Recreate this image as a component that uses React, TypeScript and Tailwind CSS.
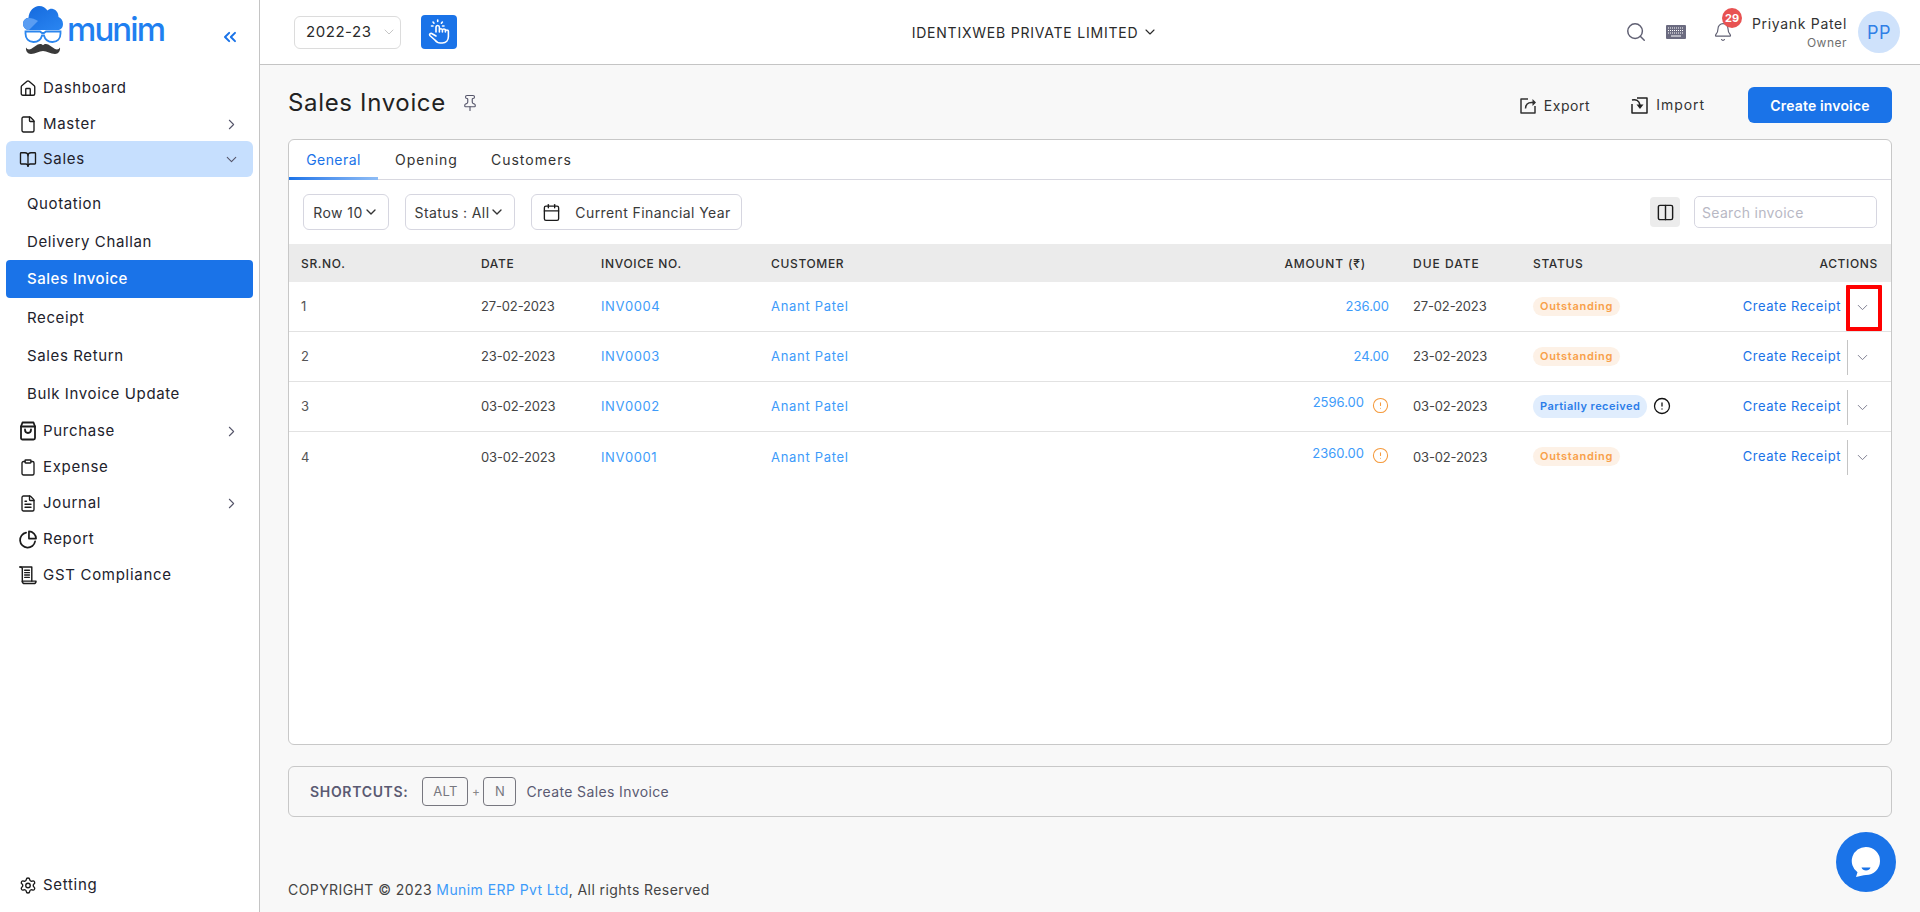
import React from "react";
import {
  ChevronRight, ChevronDown, ChevronsLeft, Home, File, BookOpen, Clipboard, FileText, Settings,
  Search, Bell, Calendar, Columns2, CircleAlert, Pin,
} from "lucide-react";

const font = { fontFamily: "Inter, 'Noto Sans', sans-serif" };

function Logo() {
  return (
    <div className="flex items-start h-[64px] pl-[23px] pt-[6px]">
      <svg width="40" height="49" viewBox="0 0 40 49" className="shrink-0">
        <defs>
          <linearGradient id="cl" x1="0" y1="0" x2="1" y2="1">
            <stop offset="0" stopColor="#1468dc" />
            <stop offset="1" stopColor="#2a86f2" />
          </linearGradient>
        </defs>
        <path d="M4.5 24C1.5 23 0 20.500 0 18c0-3.500 2.500-6 5.500-6.300C6 5 11 0 16 0c4 0 6.500 1.800 8.500 4.500C26 3 28 2.500 30 3c3.500 1 5.500 4 5.500 8 2.500 1 4.500 3.500 4.500 7 0 3.500-2 6-5 6z" fill="url(#cl)" />
        <path d="M0 18c0-3.500 2.500-6 6-6 3 0 6 1 9 3l-9 9H4.500C1.500 23 0 20.500 0 18z" fill="#5a9df2" />
        <path d="M2.500 25.500h14.500l2 1.500h2l2-1.500h14.500v2c0 5-3 8.500-8 8.500-4.500 0-7.500-2.500-8.500-6.500h-2c-1 4-4 6.500-8.500 6.500-5 0-8-3.500-8-8.500z" fill="none" stroke="#2b86ee" strokeWidth="1.800" />
        <path d="M3 41.500c1 2 3 2.500 5 1.500 3-1.500 6-5 9-5 1.300 0 2.300.5 3 1.300.7-.8 1.700-1.300 3-1.300 3 0 6 3.500 9 5 2 1 4 .5 5-1.500.5 3-1.500 6.500-5 6.500-4.500 0-8-3-12-3s-7.500 3-12 3c-3.500 0-5.500-3.500-5-6.500z" fill="#3a3a3a" />
      </svg>
      <span className="ml-[4px] mt-[5px] text-[33px] leading-[36px] font-medium text-[#1f7ff0] tracking-[-1.9px]" style={font}>munim</span>
      <ChevronsLeft className="absolute left-[220px] top-[27px] text-[#1a73e8]" size={20} strokeWidth={2.400} />
    </div>
  );
}

function Bag() {
  return (
    <svg width="18" height="20" viewBox="0 0 18 20" fill="none" stroke="#1b1b1b" strokeWidth="1.800" strokeLinecap="round" strokeLinejoin="round">
      <path d="M2 5.500 3.500 1.500h11L16 5.500v11.500a1.500 1.500 0 0 1-1.500 1.500h-11A1.500 1.500 0 0 1 2 17z" />
      <path d="M2 5.500h14" />
      <path d="M6 8.500c0 2 1.300 3.500 3 3.500s3-1.500 3-3.500" />
    </svg>
  );
}

function Scroll() {
  return (
    <svg width="19" height="20" viewBox="0 0 19 20" fill="none" stroke="#1b1b1b" strokeWidth="1.500" strokeLinecap="round" strokeLinejoin="round">
      <path d="M1 1.500h12.500v15" />
      <path d="M1 1.500c1.500 0 2.500.7 2.500 2v13.500" />
      <path d="M3.500 16.500h14.500c0 1.500-1 2.500-2.500 2.500H6c-1.500 0-2.500-1-2.500-2.500" />
      <path d="M6 5h5M6 7.500h5M6 10h5M6 12.500h5" />
    </svg>
  );
}

function PieIcon() {
  return (
    <svg width="19" height="19" viewBox="0 0 19 19" fill="none" stroke="#1b1b1b" strokeWidth="1.800" strokeLinecap="round" strokeLinejoin="round">
      <path d="M7.500 2.200A8 8 0 1 0 17 11.500" />
      <path d="M10.500 1v7.500H18A7.500 7.500 0 0 0 10.500 1z" />
    </svg>
  );
}

function NavItem({ icon, label, arrow, active }: { icon: React.ReactNode; label: string; arrow?: "right" | "down"; active?: boolean }) {
  return (
    <div className={active ? "flex items-center h-[36px] pl-[13px] pr-[13px] rounded-[6px] bg-[#c6dffe]" : "flex items-center h-[36px] pl-[13px] pr-[13px] rounded-[6px]"}>
      <span className="w-[18px] h-[20px] flex items-center justify-center shrink-0">{icon}</span>
      <span className="ml-[6px] text-[15px] tracking-[0.7px] text-[#22222c] flex-1">{label}</span>
      {arrow === "right" && <ChevronRight size={17} strokeWidth={1.500} className="text-[#55556a]" />}
      {arrow === "down" && <ChevronDown size={17} strokeWidth={1.500} className="text-[#55556a]" />}
    </div>
  );
}

function SubItem({ label, active }: { label: string; active?: boolean }) {
  return (
    <div className={active ? "-mt-px mb-px flex items-center h-[38px] pl-[21px] rounded-[4px] bg-[#1a73e8] text-white font-medium text-[15px] tracking-[0.5px]" : "flex items-center h-[38px] pl-[21px] text-[15px] tracking-[0.62px] text-[#22222c]"}>
      {label}
    </div>
  );
}

function Sidebar() {
  const icon = { size: 21, strokeWidth: 1.800, color: "#1b1b1b" };
  return (
    <aside className="relative w-[260px] shrink-0 h-full bg-white border-r border-[#c4c4c4] flex flex-col">
      <Logo />
      <nav className="px-[6px] pt-[6px] flex flex-col">
        <NavItem icon={<Home {...icon} />} label="Dashboard" />
        <NavItem icon={<File {...icon} />} label="Master" arrow="right" />
        <div className="-mt-px">
          <NavItem icon={<BookOpen {...icon} />} label="Sales" arrow="down" active />
        </div>
        <div className="pt-[8px] flex flex-col">
          <SubItem label="Quotation" />
          <SubItem label="Delivery Challan" />
          <SubItem label="Sales Invoice" active />
          <SubItem label="Receipt" />
          <SubItem label="Sales Return" />
          <SubItem label="Bulk Invoice Update" />
        </div>
        <NavItem icon={<Bag />} label="Purchase" arrow="right" />
        <NavItem icon={<Clipboard {...icon} />} label="Expense" />
        <NavItem icon={<FileText {...icon} />} label="Journal" arrow="right" />
        <NavItem icon={<PieIcon />} label="Report" />
        <NavItem icon={<Scroll />} label="GST Compliance" />
      </nav>
      <div className="mt-auto px-[6px] pb-[9px]">
        <NavItem icon={<Settings {...icon} />} label="Setting" />
      </div>
    </aside>
  );
}

function HandIcon() {
  return (
    <svg width="22" height="26" viewBox="0 0 22 26" fill="none" stroke="#fff" strokeWidth="1.600" strokeLinecap="round" strokeLinejoin="round">
      <path d="M8 13V8.200a1.700 1.700 0 0 1 3.400 0V13m0-2.200a1.600 1.600 0 0 1 3 0V13m0-1.500a1.500 1.500 0 0 1 3 0V13m0-.5a1.500 1.500 0 0 1 3 0v5c0 4-2.500 6.500-6 6.500h-2c-2.500 0-4-1-5.500-3L1.800 16.500c-.8-1.300 1-2.800 2.300-1.800L8 17" />
      <path d="M9.700 1v1.500M5 3l1 1.200M14.400 3l-1 1.200M3.500 7H5M14.500 7H16" />
    </svg>
  );
}

function KeyboardIcon() {
  return (
    <svg width="20" height="14" viewBox="0 0 20 14">
      <rect width="20" height="14" rx="1" fill="#6b6b80" />
      <path d="M2 3h16M2 5.500h16M2 8h16" stroke="#fff" strokeWidth="1" strokeDasharray="1 1" />
      <path d="M5 11h10" stroke="#fff" strokeWidth="1" />
    </svg>
  );
}

function Header() {
  return (
    <header className="h-[65px] shrink-0 bg-white border-b border-[#c4c4c4] flex items-center pl-[34px] pr-[20px] relative">
      <div className="w-[107px] h-[33px] border border-[#dcdcdc] rounded-[6px] flex items-center pl-[11px] text-[15px] tracking-[0.55px] text-[#2a2a2a]">
        2022-23
        <ChevronDown size={16} strokeWidth={1.200} className="ml-[9px] text-[#b8b8b8]" />
      </div>
      <div className="ml-[20px] w-[36px] h-[34px] rounded-[4px] bg-[#1a73e8] flex items-center justify-center">
        <HandIcon />
      </div>
      <div className="flex-1 flex items-center justify-center pr-[6px]">
        <span className="text-[14px] tracking-[0.78px] text-[#2a2a2a] -ml-[6px]">IDENTIXWEB PRIVATE LIMITED</span>
        <ChevronDown size={16} strokeWidth={1.700} className="ml-[4px] text-[#2a2a2a]" />
      </div>
      <Search size={22} strokeWidth={1.600} className="text-[#5f5f72]" />
      <span className="ml-[19px]"><KeyboardIcon /></span>
      <div className="relative ml-[27px] w-[20px] h-[22px] flex items-center justify-center">
        <Bell size={22} strokeWidth={1.400} className="text-[#5f5f72]" />
        <span className="absolute left-[9px] top-[-13px] w-[20px] h-[20px] rounded-full bg-[#e85252] text-white text-[11px] font-bold flex items-center justify-center">29</span>
      </div>
      <div className="ml-[16px] w-[98px] flex flex-col items-end whitespace-nowrap">
        <span className="text-[14px] leading-[20px] tracking-[0.68px] text-[#333]">Priyank Patel</span>
        <span className="text-[12px] leading-[16px] tracking-[0.5px] text-[#6f6f6f] mt-[1px]">Owner</span>
      </div>
      <div className="ml-[11px] w-[42px] h-[42px] rounded-full bg-[#cfe2fb] flex items-center justify-center text-[18px] tracking-[0.6px] text-[#2f7fe6]">PP</div>
    </header>
  );
}

function ExportIcon() {
  return (
    <svg width="17" height="17" viewBox="0 0 17 17" fill="none" stroke="#333" strokeWidth="1.500" strokeLinejoin="round">
      <path d="M8 2H1v14h14V9" />
      <path d="M5.500 11.500c.2-3.500 2.500-6 6-6H15" />
      <path d="M12.500 2 16 5.500 12.500 9z" fill="#333" stroke="none" />
    </svg>
  );
}

function ImportIcon() {
  return (
    <svg width="17" height="17" viewBox="0 0 17 17" fill="none" stroke="#222" strokeWidth="1.500" strokeLinejoin="round">
      <path d="M6 1h10v15H1V7" />
      <path d="M1 3c4-1 7 .5 8 5" />
      <path d="M5.500 7.500h7L9 12z" fill="#222" stroke="none" />
    </svg>
  );
}

function TitleRow() {
  return (
    <div className="h-[74px] shrink-0 pt-[22px] flex items-start">
      <div className="h-[32px] flex items-center">
        <h1 className="text-[24px] font-normal tracking-[0.66px] text-[#222]">Sales Invoice</h1>
        <Pin size={18} strokeWidth={1.500} className="ml-[15px] text-[#55556a]" />
      </div>
      <div className="ml-auto h-[36px] flex items-center text-[14px] tracking-[0.55px] text-[#333]">
        <ExportIcon />
        <span className="ml-[7px]">Export</span>
        <span className="ml-[41px]"><ImportIcon /></span>
        <span className="ml-[8px] -mt-[2px] tracking-[0.95px]">Import</span>
        <button className="ml-[43px] w-[144px] h-[36px] rounded-[6px] bg-[#1a73e8] text-white text-[14px] font-semibold tracking-[0.15px]">Create invoice</button>
      </div>
    </div>
  );
}

function Filter({ children, width }: { children: React.ReactNode; width: string }) {
  return (
    <div className={`${width} h-[36px] shrink-0 border border-[#d6d6e0] rounded-[6px] flex items-center justify-center text-[14px] tracking-[0.4px] text-[#3a3a3a] whitespace-nowrap`}>
      {children}
    </div>
  );
}

const gridCols = "grid grid-cols-[180px_120px_170px_1fr_200px_120px_130px_240px]";

function Outstanding() {
  return <span className="inline-flex items-center h-[19px] px-[7px] rounded-full bg-[#fdf1e6] text-[#f8a04a] text-[11px] font-semibold tracking-[0.7px]">Outstanding</span>;
}

function Row({ n, date, inv, amount, warn, status, last }: { n: number; date: string; inv: string; amount: string; warn?: boolean; status: React.ReactNode; last?: boolean }) {
  return (
    <div className={last ? `${gridCols} h-[50px] pt-px items-center text-[13px]` : `${gridCols} h-[50px] pt-px items-center text-[13px] border-b border-[#e2e2e2]`}>
      <div className="pl-[12px] text-[#555]">{n}</div>
      <div className="pl-[12px] text-[#444] tracking-[-0.15px]">{date}</div>
      <div className="pl-[12px] text-[#3d9bfa] tracking-[0.6px]">{inv}</div>
      <div className="pl-[12px] text-[#3d9bfa] tracking-[0.7px]">Anant Patel</div>
      <div className="pr-[12px] flex justify-end items-center text-[#3d9bfa]">
        {warn ? (
          <>
            <span className="-mt-[8px]">{amount}</span>
            <CircleAlert size={17} strokeWidth={1.500} className="ml-[8px] -mt-[4px] shrink-0 text-[#f59a3c]" />
          </>
        ) : amount}
      </div>
      <div className="pl-[12px] text-[#444] tracking-[-0.15px]">{date}</div>
      <div className="pl-[12px] flex items-center -mt-[2px]">{status}</div>
      <div className="flex items-center justify-end pr-[9px] h-full">
        <span className="text-[#1a73e8] -mt-[1px] tracking-[0.55px] whitespace-nowrap">Create Receipt</span>
        <span className="ml-[6px] h-[35px] w-px bg-[#c4c4c4]" />
        <span className="w-[34px] pr-[6px] flex justify-center"><ChevronDown size={17} strokeWidth={1.300} className="text-[#77778a]" /></span>
      </div>
    </div>
  );
}

function Card() {
  return (
    <section className="relative h-[606px] shrink-0 bg-white border border-[#c8c8c8] rounded-[6px] overflow-hidden flex flex-col">
      <div className="h-[40px] shrink-0 border-b border-[#d8d8e0] flex text-[14px] tracking-[1px] text-[#333] relative">
        <div className="relative w-[89px] flex items-center justify-center text-[#1a73e8] tracking-[0.42px] pb-[1px]">
          General
          <span className="absolute left-0 right-0 bottom-[-1px] h-[3px] bg-gradient-to-r from-[#1a73e8] to-[#8fbdf5]" />
        </div>
        <div className="ml-[17px] flex items-center pb-[1px]">Opening</div>
        <div className="ml-[33px] flex items-center pb-[1px]">Customers</div>
      </div>
      <div className="h-[64px] shrink-0 pl-[14px] pr-[14px] flex items-center gap-[16px]">
        <Filter width="w-[86px]">Row 10<ChevronDown size={16} strokeWidth={2} className="text-[#333]" /></Filter>
        <Filter width="w-[110px]">Status : All<ChevronDown size={16} strokeWidth={2} className="text-[#333]" /></Filter>
        <Filter width="w-[211px]">
          <Calendar size={19} strokeWidth={1.700} className="text-[#1b1b1b]" />
          <span className="ml-[14px]">Current Financial Year</span>
        </Filter>
        <div className="ml-auto w-[30px] h-[30px] rounded-[4px] bg-[#ececec] flex items-center justify-center">
          <Columns2 size={19} strokeWidth={1.800} className="text-[#1b1b1b]" />
        </div>
        <div className="-ml-[2px] w-[183px] h-[32px] border border-[#d6d6e0] rounded-[5px] flex items-center pl-[7px] text-[14px] tracking-[0.3px] text-[#b8b8c4]">Search invoice</div>
      </div>
      <div className={`${gridCols} h-[38px] pt-px shrink-0 items-center bg-[#ebebeb] text-[12px] font-medium tracking-[0.65px] text-[#2e2e2e]`}>
        <div className="pl-[12px]">SR.NO.</div>
        <div className="pl-[12px]">DATE</div>
        <div className="pl-[12px]">INVOICE NO.</div>
        <div className="pl-[12px]">CUSTOMER</div>
        <div className="pr-[35px] text-right tracking-[0.85px]">AMOUNT (₹)</div>
        <div className="pl-[12px] tracking-[1px]">DUE DATE</div>
        <div className="pl-[12px]">STATUS</div>
        <div className="pr-[13px] text-right">ACTIONS</div>
      </div>
      <Row n={1} date="27-02-2023" inv="INV0004" amount="236.00" status={<Outstanding />} />
      <Row n={2} date="23-02-2023" inv="INV0003" amount="24.00" status={<Outstanding />} />
      <Row n={3} date="03-02-2023" inv="INV0002" amount="2596.00" warn status={
        <>
          <span className="inline-flex items-center shrink-0 h-[23px] px-[7px] rounded-full bg-[#e0edfd] text-[#2b7de9] text-[11px] font-semibold tracking-[0.45px] whitespace-nowrap">Partially received</span>
          <CircleAlert size={18} strokeWidth={1.700} className="ml-[6px] shrink-0 text-[#111]" />
        </>
      } />
      <Row n={4} date="03-02-2023" inv="INV0001" amount="2360.00" warn status={<Outstanding />} last />
      <div className="absolute left-[1557px] top-[145px] w-[36px] h-[46px] border-4 border-[#f00] rounded-[1px]" />
    </section>
  );
}

function Shortcuts() {
  const key = "h-[29px] border border-[#77777f] rounded-[4px] flex items-center justify-center text-[13px] tracking-[0.3px] text-[#77777f]";
  return (
    <div className="mt-[21px] h-[51px] shrink-0 border border-[#c8c8c8] rounded-[6px] flex items-center pl-[21px] text-[#5a5a72]">
      <span className="text-[14px] font-semibold tracking-[0.68px]">SHORTCUTS:</span>
      <span className={`ml-[14px] w-[46px] ${key}`}>ALT</span>
      <span className="w-[15px] text-center text-[12px] text-[#888]">+</span>
      <span className={`w-[33px] ${key}`}>N</span>
      <span className="ml-[10px] text-[14px] tracking-[0.38px]">Create Sales Invoice</span>
    </div>
  );
}

export default function App() {
  return (
    <div className="relative flex w-full h-[912px] overflow-hidden bg-[#f8f8f8]" style={font}>
      <Sidebar />
      <div className="flex-1 flex flex-col min-w-0">
        <Header />
        <main className="flex-1 flex flex-col px-[28px]">
          <TitleRow />
          <Card />
          <Shortcuts />
          <footer className="mt-[63px] text-[14px] leading-[20px] tracking-[0.42px] text-[#444]">
            COPYRIGHT © 2023 <span className="text-[#3d9bfa]">Munim ERP Pvt Ltd</span>, All rights Reserved
          </footer>
        </main>
      </div>
      <div className="absolute left-[1836px] top-[832px] w-[60px] h-[60px] rounded-full bg-[#1a73e8] flex items-center justify-center">
        <svg width="30" height="32" viewBox="0 0 30 32">
          <path d="M15 1a14 14 0 0 1 0 28c-1.500 0-3 .3-4.500.8L5 31l1.500-4.700A14 14 0 0 1 15 1z" fill="#fff" />
          <path d="M10.500 21.500h9c-.5 2-2.500 3-4.500 3s-4-1-4.500-3z" fill="#1a73e8" />
        </svg>
      </div>
    </div>
  );
}
